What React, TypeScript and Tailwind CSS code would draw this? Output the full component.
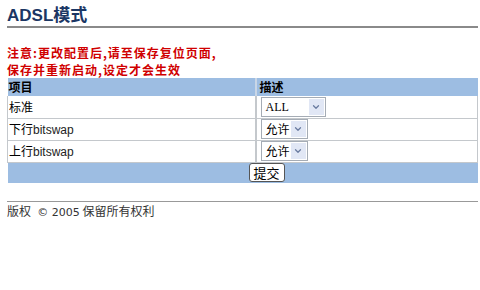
import { ChevronDown } from "lucide-react";

const ROWS = [
  { label: "标准", value: "ALL", wide: true },
  { label: "下行bitswap", value: "允许", wide: false },
  { label: "上行bitswap", value: "允许", wide: false },
];

function FakeSelect({ value, wide }: { value: string; wide: boolean }) {
  return (
    <div
      className={`flex h-[20px] items-center border border-[#a5acb5] bg-white ${wide ? "w-[65px]" : "w-[47px]"}`}
    >
      <span
        className={`flex-1 pl-[4px] text-[12px] leading-none text-black ${
          value === "ALL" ? "font-['Liberation_Serif',serif]" : "font-['Noto_Sans_CJK_SC',sans-serif]"
        }`}
      >
        {value}
      </span>
      <span className="mr-[1px] flex h-[16px] w-[15px] items-center justify-center bg-[#e1e7f5]">
        <ChevronDown className="h-[10px] w-[10px] text-[#6a7ca0]" strokeWidth={3} />
      </span>
    </div>
  );
}

export default function App() {
  return (
    <div className="h-[290px] w-[480px] bg-white px-[7px] pt-[6px] font-['Noto_Sans_CJK_SC',sans-serif]">
      <h1 className="h-[19px] text-[17px] font-bold leading-[19px] text-[#1b3664] font-['Liberation_Sans','Noto_Sans_CJK_SC',sans-serif]">
        ADSL模式
      </h1>
      <div className="mt-[1px] h-[2px] w-[471px] bg-[#8a8a8a]" />

      <div className="mt-[16px] flex flex-col text-[12px] font-bold leading-[17px] tracking-[1px] text-[#d00000]">
        <p>注意:更改配置后,请至保存复位页面,</p>
        <p>保存并重新启动,设定才会生效</p>
      </div>

      <table className="w-[471px] border-collapse text-[12px] text-black">
        <thead>
          <tr className="h-[18px] bg-[#9dbde2]">
            <th className="w-[248px] border-r-2 border-[#c9d6e6] px-[1px] text-left font-bold leading-none">项目</th>
            <th className="px-[3px] text-left font-bold leading-none">描述</th>
          </tr>
        </thead>
        <tbody>
          {ROWS.map((row) => (
            <tr key={row.label} className="h-[22px] border-b border-[#c4c8cc]">
              <td className="border-r-2 border-l border-[#c4c8cc] px-[1px] leading-none">
                <span className="font-['Noto_Sans_CJK_SC',sans-serif]">{row.label.replace("bitswap", "")}</span>
                {row.label.includes("bitswap") && (
                  <span className="font-['Liberation_Sans',sans-serif] text-[12px] text-[#222]">bitswap</span>
                )}
              </td>
              <td className="border-r border-[#c4c8cc] px-[4px] py-0">
                <FakeSelect value={row.value} wide={row.wide} />
              </td>
            </tr>
          ))}
          <tr className="h-[21px] bg-[#9dbde2]">
            <td colSpan={2} className="pl-[241px] text-left leading-none">
              <button
                type="button"
                className="h-[19px] rounded-[3px] border border-[#555] bg-white px-[4px] text-[13px] leading-none text-black"
              >
                提交
              </button>
            </td>
          </tr>
        </tbody>
      </table>

      <div className="mt-[18px] h-px w-[471px] bg-[#999]" />
      <p className="mt-[2px] text-[12px] leading-[14px] text-[#333]">
        版权 <span className="font-['DejaVu_Sans',sans-serif] text-[11px]">&nbsp;© 2005</span> 保留所有权利
      </p>
    </div>
  );
}
